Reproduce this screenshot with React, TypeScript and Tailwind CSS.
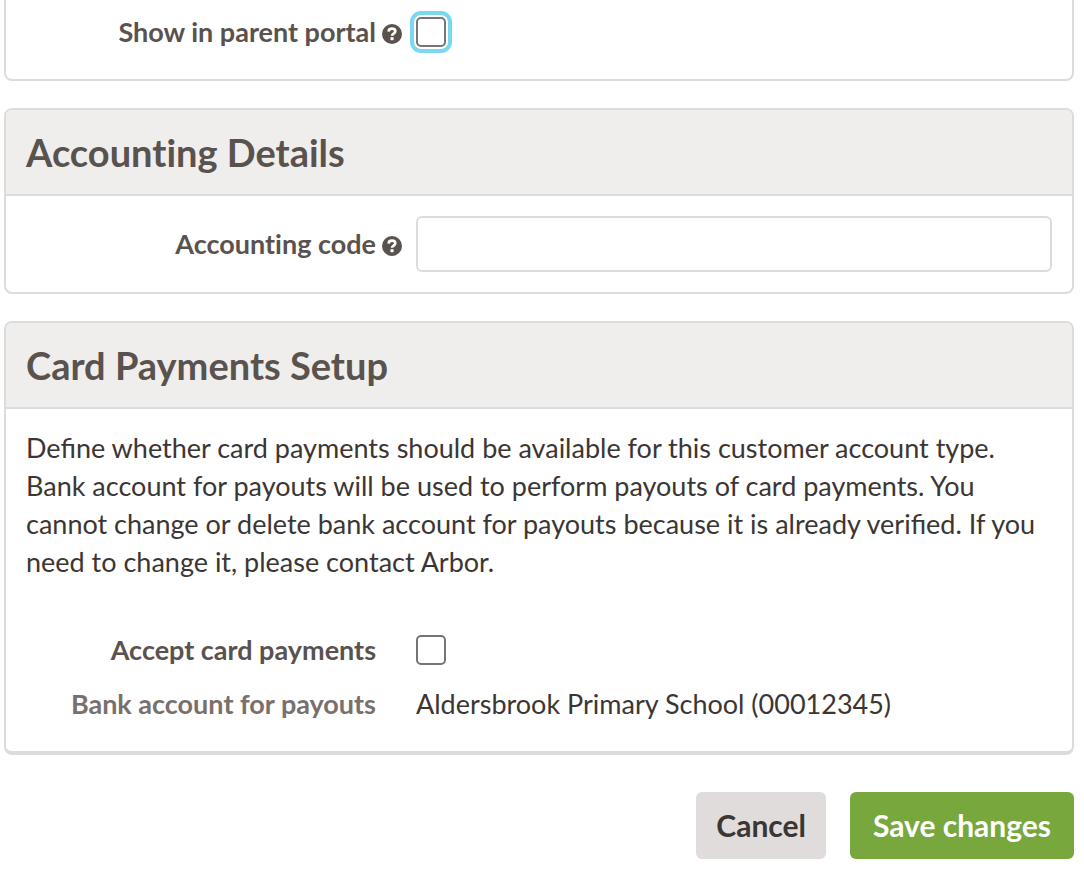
import React, { useState } from 'react';

interface FieldRowProps {
    label: string;
    htmlFor?: string;
    help?: string;
    muted?: boolean;
    children: React.ReactNode;
}

function HelpIcon({ title }: { title: string }) {
    return (
        <svg viewBox="0 0 20 20" role="img" className="size-5">
            <title>{title}</title>
            <circle cx="10" cy="10" r="10" fill="#5a524e" />
            <path d="M6.6 7.6C6.7 5.6 8.1 4.7 10 4.7c2 0 3.3 1 3.3 2.6 0 2.2-3.2 2.3-3.2 4.4" fill="none" stroke="#fff" strokeWidth="2.7" />
            <rect x="8.5" y="13.2" width="3.1" height="3" fill="#fff" />
        </svg>
    );
}

function FieldRow({ label, htmlFor, help, muted, children }: FieldRowProps) {
    const labelClass = `w-[350px] shrink-0 text-right text-[27px] leading-[38px] font-bold [font-variant-ligatures:none] ${muted ? 'text-[#78706c]' : 'text-[#5a524e]'}`;

    return (
        <div className="flex items-center">
            {htmlFor ? (
                <label htmlFor={htmlFor} className={labelClass}>{label}</label>
            ) : (
                <span className={labelClass}>{label}</span>
            )}
            <span className="w-10 shrink-0 pl-1.5 pt-1">
                {help && <HelpIcon title={help} />}
            </span>
            <div className="flex min-w-0 flex-1 items-center">{children}</div>
        </div>
    );
}

interface CheckboxProps {
    id: string;
    checked: boolean;
    highlighted?: boolean;
    onChange: (checked: boolean) => void;
}

function Checkbox({ id, checked, highlighted, onChange }: CheckboxProps) {
    return (
        <input
            id={id}
            type="checkbox"
            checked={checked}
            onChange={(e) => onChange(e.target.checked)}
            className={`size-[30px] appearance-none rounded-[5px] border-2 border-[#757575] bg-white checked:bg-[#77a73d] ${highlighted ? 'outline-4 outline-offset-2 outline-[#7ad7f0]' : ''}`}
        />
    );
}

function Panel({ title, className, children }: { title: string; className?: string; children: React.ReactNode }) {
    return (
        <section className={`overflow-hidden rounded-lg border-2 border-[#dcdcdc] bg-white ${className ?? ''}`}>
            <h2 className="border-b-2 border-[#dcdcdc] bg-[#efeeec] px-5 py-[18px] text-[38px] leading-[48px] font-bold text-[#5a524e] [font-variant-ligatures:none]">
                {title}
            </h2>
            {children}
        </section>
    );
}

export default function App() {
    const [showInPortal, setShowInPortal] = useState(false);
    const [accountingCode, setAccountingCode] = useState("");
    const [acceptCards, setAcceptCards] = useState(false);

    return (
        <form onSubmit={(e) => e.preventDefault()} className="flex flex-col gap-[27px] pr-2.5 pb-4 pl-1 font-['Lato',sans-serif]">
            <section className="rounded-b-lg border-2 border-t-0 border-[#dcdcdc] bg-white px-5 pt-[13px] pb-7">
                <FieldRow label="Show in parent portal" htmlFor="show-in-portal" help="Show this account in the parent portal">
                    <Checkbox id="show-in-portal" checked={showInPortal} highlighted onChange={setShowInPortal} />
                </FieldRow>
            </section>

            <Panel title="Accounting Details">
                <div className="p-5">
                    <FieldRow label="Accounting code" htmlFor="accounting-code" help="Code used by your accounting system">
                        <input
                            id="accounting-code"
                            type="text"
                            value={accountingCode}
                            onChange={(e) => setAccountingCode(e.target.value)}
                            className="h-14 w-full rounded-md border-2 border-[#dfdbdb] bg-white px-3 text-[27px] text-[#3b3634] outline-none"
                        />
                    </FieldRow>
                </div>
            </Panel>

            <Panel title="Card Payments Setup" className="border-b-4">
                <div className="px-5 pt-5 pb-7">
                    <p className="text-[27px] leading-[38px] text-[#3b3634]">
                        Define whether card payments should be available for this customer account type.
                        Bank account for payouts will be used to perform payouts of card payments. You
                        cannot change or delete bank account for payouts because it is already verified. If you
                        need to change it, please contact Arbor.
                    </p>
                    <div className="mt-[50px] flex flex-col gap-4">
                        <FieldRow label="Accept card payments" htmlFor="accept-cards">
                            <Checkbox id="accept-cards" checked={acceptCards} onChange={setAcceptCards} />
                        </FieldRow>
                        <FieldRow label="Bank account for payouts" muted>
                            <span className="text-[27px] leading-[38px] text-[#3b3634]">Aldersbrook Primary School (00012345)</span>
                        </FieldRow>
                    </div>
                </div>
            </Panel>

            <div className="mt-2.5 flex justify-end gap-6">
                <button type="button" className="h-[67px] rounded-md bg-[#dfdcdb] px-5 text-[30px] font-bold text-[#3b3634]">
                    Cancel
                </button>
                <button type="submit" className="h-[67px] min-w-56 rounded-md bg-[#77a73d] px-5 text-[30px] font-bold text-white">
                    Save changes
                </button>
            </div>
        </form>
    );
}
